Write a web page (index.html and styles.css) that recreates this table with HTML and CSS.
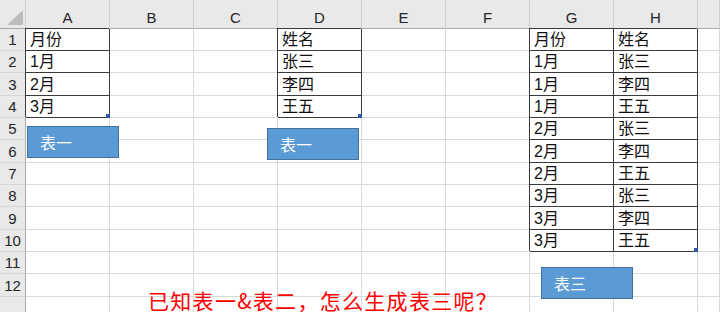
FILE: index.html
```html
<!DOCTYPE html>
<html lang="zh-CN">
<head>
    <meta charset="UTF-8">
    <title>Sheet1</title>
    <link rel="stylesheet" href="styles.css">
</head>
<body>
    <div class="sheet">
        <div class="row head">
            <div class="corner"><span class="tri"></span></div>
            <div class="ch">A</div><div class="ch">B</div><div class="ch">C</div><div class="ch">D</div>
            <div class="ch">E</div><div class="ch">F</div><div class="ch">G</div><div class="ch">H</div><div class="ch"></div>
        </div>
        <div class="row">
            <div class="rh">1</div>
            <div class="c b">月份</div><div class="c"></div><div class="c"></div><div class="c b">姓名</div>
            <div class="c"></div><div class="c"></div><div class="c b">月份</div><div class="c b">姓名</div><div class="c"></div>
        </div>
        <div class="row">
            <div class="rh">2</div>
            <div class="c b">1月</div><div class="c"></div><div class="c"></div><div class="c b">张三</div>
            <div class="c"></div><div class="c"></div><div class="c b">1月</div><div class="c b">张三</div><div class="c"></div>
        </div>
        <div class="row tall">
            <div class="rh">3</div>
            <div class="c b">2月</div><div class="c"></div><div class="c"></div><div class="c b">李四</div>
            <div class="c"></div><div class="c"></div><div class="c b">1月</div><div class="c b">李四</div><div class="c"></div>
        </div>
        <div class="row">
            <div class="rh">4</div>
            <div class="c b">3月<span class="handle"></span></div><div class="c"></div><div class="c"></div><div class="c b">王五<span class="handle"></span></div>
            <div class="c"></div><div class="c"></div><div class="c b">1月</div><div class="c b">王五</div><div class="c"></div>
        </div>
        <div class="row">
            <div class="rh">5</div>
            <div class="c"></div><div class="c"></div><div class="c"></div><div class="c"></div>
            <div class="c"></div><div class="c"></div><div class="c b">2月</div><div class="c b">张三</div><div class="c"></div>
        </div>
        <div class="row tall">
            <div class="rh">6</div>
            <div class="c"></div><div class="c"></div><div class="c"></div><div class="c"></div>
            <div class="c"></div><div class="c"></div><div class="c b">2月</div><div class="c b">李四</div><div class="c"></div>
        </div>
        <div class="row">
            <div class="rh">7</div>
            <div class="c"></div><div class="c"></div><div class="c"></div><div class="c"></div>
            <div class="c"></div><div class="c"></div><div class="c b">2月</div><div class="c b">王五</div><div class="c"></div>
        </div>
        <div class="row">
            <div class="rh">8</div>
            <div class="c"></div><div class="c"></div><div class="c"></div><div class="c"></div>
            <div class="c"></div><div class="c"></div><div class="c b">3月</div><div class="c b">张三</div><div class="c"></div>
        </div>
        <div class="row tall">
            <div class="rh">9</div>
            <div class="c"></div><div class="c"></div><div class="c"></div><div class="c"></div>
            <div class="c"></div><div class="c"></div><div class="c b">3月</div><div class="c b">李四</div><div class="c"></div>
        </div>
        <div class="row">
            <div class="rh">10</div>
            <div class="c"></div><div class="c"></div><div class="c"></div><div class="c"></div>
            <div class="c"></div><div class="c"></div><div class="c b">3月</div><div class="c b">王五<span class="handle"></span></div><div class="c"></div>
        </div>
        <div class="row">
            <div class="rh">11</div>
            <div class="c"></div><div class="c"></div><div class="c"></div><div class="c"></div>
            <div class="c"></div><div class="c"></div><div class="c"></div><div class="c"></div><div class="c"></div>
        </div>
        <div class="row tall">
            <div class="rh">12</div>
            <div class="c"></div><div class="c"></div><div class="c"></div><div class="c"></div>
            <div class="c"></div><div class="c"></div><div class="c"></div><div class="c"></div><div class="c"></div>
        </div>
        <div class="row">
            <div class="rh"></div>
            <div class="c"></div><div class="c"></div><div class="c"></div><div class="c"></div>
            <div class="c"></div><div class="c"></div><div class="c"></div><div class="c"></div><div class="c"></div>
        </div>

        <!-- floating shapes over the grid -->
        <div class="shape shape-1">表一</div>
        <div class="shape shape-2">表一</div>
        <div class="shape shape-3">表三</div>
        <div class="note">已知表一&amp;表二，怎么生成表三呢？</div>
    </div>
</body>
</html>
```

FILE: styles.css
```css
* {
    margin: 0;
    padding: 0;
    box-sizing: border-box;
}

body {
    background: #fff;
    font-family: "Liberation Sans", "Noto Sans CJK SC", sans-serif;
    overflow: hidden;
}

.sheet {
    position: relative;
    width: 720px;
    height: 312px;
    overflow: hidden;
}

.row {
    display: grid;
    grid-template-columns: 26px repeat(8, 84px) 1fr;
    height: 22px;
}

.row.tall {
    height: 23px;
}

.row.head {
    height: 29px;
}

/* column and row headers */
.corner,
.ch {
    position: relative;
    background: #e9e9e9;
    border-right: 1px solid #cfcfcf;
    border-bottom: 1px solid #ababab;
}

.ch {
    display: flex;
    align-items: center;
    justify-content: center;
    padding-top: 6px;
    font-size: 15px;
    color: #262626;
}

.tri {
    position: absolute;
    left: 7px;
    top: 10px;
    width: 16px;
    height: 15px;
    background: #bdbdbd;
    clip-path: polygon(100% 0, 100% 100%, 0 100%);
}

.rh {
    display: flex;
    align-items: flex-end;
    justify-content: center;
    background: #e9e9e9;
    border-right: 1px solid #ababab;
    border-bottom: 1px solid #d6d6d6;
    font-size: 15px;
    line-height: 20px;
    color: #262626;
}

/* cells */
.c {
    position: relative;
    display: flex;
    align-items: flex-end;
    padding-left: 4px;
    border-right: 1px solid #dadada;
    border-bottom: 1px solid #dadada;
    font-size: 16px;
    line-height: 20px;
    color: #111;
    white-space: nowrap;
}

.c.b {
    border-right-color: #3a3a3a;
    border-bottom-color: #3a3a3a;
    box-shadow: -1px -1px 0 #3a3a3a;
}

.handle {
    position: absolute;
    right: -1px;
    bottom: -1px;
    width: 4px;
    height: 4px;
    background: #2f57a6;
}

/* shapes */
.shape {
    position: absolute;
    display: flex;
    align-items: center;
    padding-left: 12px;
    width: 92px;
    height: 32px;
    background: #5b9bd5;
    border: 1px solid #41719c;
    color: #fff;
    font-size: 16px;
}

.shape-1 {
    left: 27px;
    top: 126px;
}

.shape-2 {
    left: 267px;
    top: 128px;
}

.shape-3 {
    left: 541px;
    top: 267px;
}

.note {
    position: absolute;
    left: 148px;
    top: 290px;
    font-family: "Noto Sans CJK SC", sans-serif;
    font-size: 21px;
    letter-spacing: 1.3px;
    line-height: 21px;
    color: #f00;
    white-space: nowrap;
}
```
